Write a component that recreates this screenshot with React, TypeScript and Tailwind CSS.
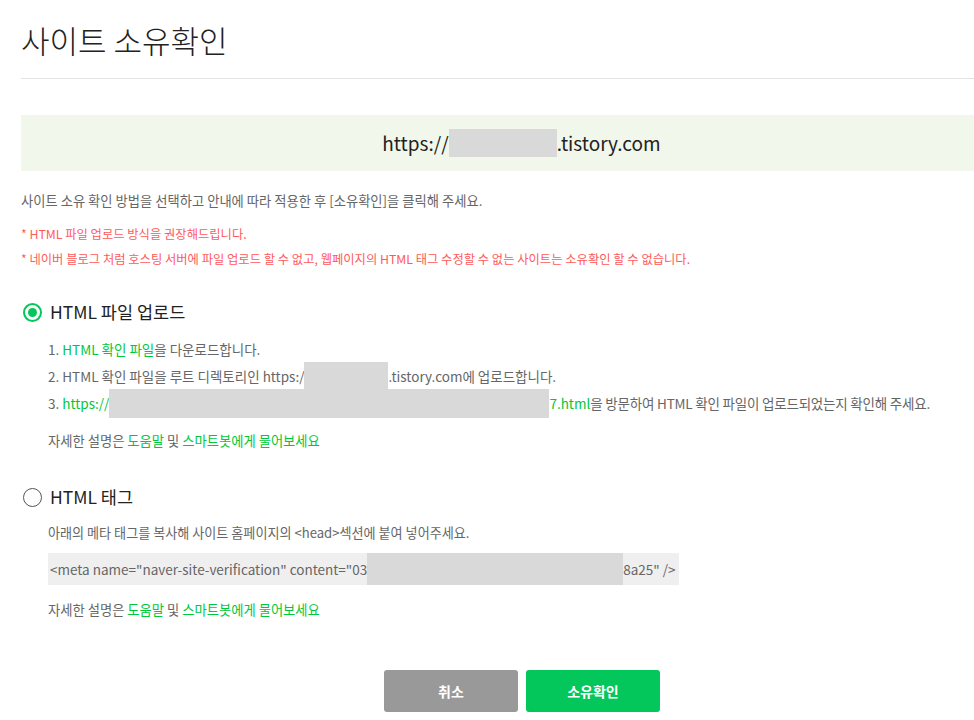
import React from 'react';

const FONT = { fontFamily: '"Noto Sans CJK KR", "Noto Sans", sans-serif' };

function Radio({ checked }: { checked: boolean }) {
  if (checked) {
    return (
      <span className="flex h-[19px] w-[19px] items-center justify-center rounded-full border-[2.5px] border-[#03c75a] bg-white">
        <span className="h-[9px] w-[9px] rounded-full bg-[#03c75a]" />
      </span>
    );
  }
  return <span className="h-[19px] w-[19px] rounded-full border-[1.5px] border-[#555] bg-white" />;
}

function Blank({ w, h = 29 }: { w: number; h?: number }) {
  return <span className="inline-block shrink-0 bg-[#d9d9d9]" style={{ width: w, height: h }} />;
}

function HelpLine() {
  return (
    <p className="text-[13.3px] leading-[20px] text-[#666]">
      자세한 설명은 <span className="text-[#00c73c]">도움말</span> 및{' '}
      <span className="text-[#00c73c]">스마트봇에게 물어보세요</span>
    </p>
  );
}

export default function App() {
  return (
    <div className="min-h-[720px] w-[974px] overflow-hidden bg-white pl-[21px]" style={FONT}>
      {/* 제목 */}
      <h1 className="pt-[20px] text-[31px] font-light leading-[40px] text-[#222]">
        사이트 소유확인
      </h1>
      <div className="mt-[18px] h-px bg-[#e3e3e3]" />

      {/* 사이트 주소 */}
      <div className="mt-[36px] flex h-[56px] items-center justify-center bg-[#f1f7ea] pl-[48px] text-[19px] text-[#222]">
        <span>https://</span>
        <Blank w={108} h={28} />
        <span>.tistory.com</span>
      </div>

      <p className="mt-[20px] text-[13.3px] leading-[20px] text-[#666]">
        사이트 소유 확인 방법을 선택하고 안내에 따라 적용한 후 [소유확인]을 클릭해 주세요.
      </p>
      <p className="mt-[13px] text-[12.3px] leading-[20px] text-[#ff5a5a]">
        * HTML 파일 업로드 방식을 권장해드립니다.
      </p>
      <p className="mt-[5px] text-[12.3px] leading-[20px] text-[#ff5a5a]">
        * 네이버 블로그 처럼 호스팅 서버에 파일 업로드 할 수 없고, 웹페이지의 HTML 태그 수정할 수 없는 사이트는 소유확인 할 수 없습니다.
      </p>

      {/* HTML 파일 업로드 */}
      <div className="mt-[31px] flex h-[24px] items-center gap-[8px] pl-[2px]">
        <Radio checked />
        <span className="text-[17.5px] text-[#222]">HTML 파일 업로드</span>
      </div>
      <div className="mt-[12px] pl-[27px] text-[13.5px] text-[#666]">
        <div className="flex h-[27px] items-center whitespace-pre">
          <span>1. </span>
          <span className="text-[#00c73c]">HTML 확인 파일</span>
          <span>을 다운로드합니다.</span>
        </div>
        <div className="flex h-[27px] items-center whitespace-pre">
          <span>2. HTML 확인 파일을 루트 디렉토리인 https:/</span>
          <Blank w={84} />
          <span>.tistory.com에 업로드합니다.</span>
        </div>
        <div className="flex h-[27px] items-center whitespace-pre">
          <span>3. </span>
          <span className="text-[#00c73c]">https://</span>
          <Blank w={440} />
          <span className="text-[#00c73c]">7.html</span>
          <span className="tracking-[-0.2px]">을 방문하여 HTML 확인 파일이 업로드되었는지 확인해 주세요.</span>
        </div>
        <div className="mt-[14px]">
          <HelpLine />
        </div>
      </div>

      {/* HTML 태그 */}
      <div className="mt-[34px] flex h-[24px] items-center gap-[8px] pl-[2px]">
        <Radio checked={false} />
        <span className="text-[17.5px] text-[#222]">HTML 태그</span>
      </div>
      <div className="pl-[27px]">
        <p className="mt-[14px] text-[13.1px] leading-[20px] text-[#666]">
          아래의 메타 태그를 복사해 사이트 홈페이지의 &lt;head&gt;섹션에 붙여 넣어주세요.
        </p>
        <div className="mt-[10px] flex h-[32px] w-[631px] items-center whitespace-pre bg-[#efefef] pl-[2px] text-[13.5px] text-[#666]">
          <span>&lt;meta name="naver-site-verification" content="03</span>
          <Blank w={256} h={32} />
          <span>8a25" /&gt;</span>
        </div>
        <div className="mt-[15px]">
          <HelpLine />
        </div>
      </div>

      {/* 버튼 */}
      <div className="mt-[50px] flex gap-[8px] pl-[363px]">
        <button className="h-[42px] w-[134px] rounded-[3px] bg-[#999] text-[14px] font-bold text-white">
          취소
        </button>
        <button className="h-[42px] w-[134px] rounded-[3px] bg-[#03c75a] text-[14px] font-bold text-white">
          소유확인
        </button>
      </div>
    </div>
  );
}
